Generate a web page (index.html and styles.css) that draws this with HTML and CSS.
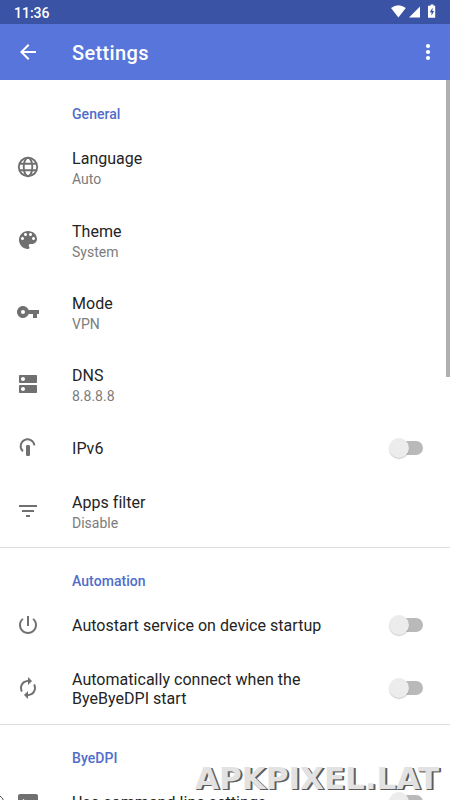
FILE: index.html
```html
<!DOCTYPE html>
<html lang="en">
<head>
<meta charset="utf-8">
<title>Settings</title>
<link rel="stylesheet" href="styles.css">
</head>
<body>
<div class="screen">
  <div class="status">
    <span class="time">11:36</span>
    <svg class="status-icons" width="48" height="16" viewBox="0 0 48 16" fill="#fff">
      <path d="M1 4Q8.200 -1.500 15.800 4L8.400 13.500Z"/>
      <path d="M30 2.500V13.500H19Z"/>
      <path d="M40.500 0.500h3v1.300h1.700v12h-7.200v-12h2.500z"/>
      <path d="M42.700 3.500l-3 4.700h1.800v3.600l2.600-4.700h-1.700z" fill="#3a53a4"/>
    </svg>
  </div>
  <header class="appbar">
    <svg class="back" width="24" height="24" viewBox="0 0 24 24" fill="#fff"><path d="M20 11H7.830l5.590-5.590L12 4l-8 8 8 8 1.410-1.410L7.830 13H20z"/></svg>
    <h1>Settings</h1>
    <svg class="more" width="24" height="24" viewBox="0 0 24 24" fill="#fff"><circle cx="12" cy="6" r="2.100"/><circle cx="12" cy="12" r="2.100"/><circle cx="12" cy="18" r="2.100"/></svg>
  </header>
  <main class="list">
    <section>
      <h2 class="first">General</h2>
      <div class="row two">
        <svg class="icon" viewBox="0 0 24 24"><g fill="none" stroke="currentColor" stroke-width="1.900"><circle cx="12" cy="12" r="9.200"/><ellipse cx="12" cy="12" rx="4.300" ry="9.200"/><path d="M3.500 8.800h17M3.500 15.200h17"/></g></svg>
        <div class="text"><div class="title">Language</div><div class="sub">Auto</div></div>
      </div>
      <div class="row two">
        <svg class="icon" viewBox="0 0 24 24"><path d="M12 3c-4.970 0-9 4.030-9 9s4.030 9 9 9c.83 0 1.500-.67 1.500-1.500 0-.39-.15-.74-.39-1.010-.23-.26-.38-.61-.38-.99 0-.83.670-1.500 1.500-1.500H16c2.760 0 5-2.240 5-5 0-4.420-4.030-8-9-8zm-5.500 9c-.83 0-1.500-.67-1.500-1.500S5.670 9 6.500 9 8 9.670 8 10.500 7.330 12 6.500 12zm3-4C8.670 8 8 7.330 8 6.500S8.670 5 9.500 5s1.500.67 1.500 1.500S10.330 8 9.500 8zm5 0c-.83 0-1.500-.67-1.500-1.500S13.670 5 14.500 5s1.500.67 1.500 1.500S15.330 8 14.500 8zm3 4c-.83 0-1.500-.67-1.500-1.500S16.670 9 17.500 9s1.500.67 1.500 1.500-.67 1.500-1.500 1.500z"/></svg>
        <div class="text"><div class="title">Theme</div><div class="sub">System</div></div>
      </div>
      <div class="row two">
        <svg class="icon" viewBox="0 0 24 24"><path d="M12.650 10C11.830 7.670 9.610 6 7 6c-3.310 0-6 2.690-6 6s2.690 6 6 6c2.610 0 4.830-1.670 5.650-4H17v4h4v-4h2v-4H12.650zM7 14c-1.100 0-2-.9-2-2s.9-2 2-2 2 .9 2 2-.9 2-2 2z"/></svg>
        <div class="text"><div class="title">Mode</div><div class="sub">VPN</div></div>
      </div>
      <div class="row two">
        <svg class="icon" viewBox="0 0 24 24"><path d="M20 13H4c-.55 0-1 .45-1 1v6c0 .55.45 1 1 1h16c.55 0 1-.45 1-1v-6c0-.55-.45-1-1-1zM7 19c-1.100 0-2-.9-2-2s.9-2 2-2 2 .9 2 2-.9 2-2 2zM20 3H4c-.55 0-1 .45-1 1v6c0 .55.45 1 1 1h16c.55 0 1-.45 1-1V4c0-.55-.45-1-1-1zM7 9c-1.100 0-2-.9-2-2s.9-2 2-2 2 .9 2 2-.9 2-2 2z"/></svg>
        <div class="text"><div class="title">DNS</div><div class="sub">8.8.8.8</div></div>
      </div>
      <div class="row one">
        <svg class="icon" viewBox="0 0 24 24"><path d="M6.900 15.300A6.900 6.900 0 1 1 18.400 9.300" fill="none" stroke="currentColor" stroke-width="1.900"/><rect x="10" y="9" width="4" height="11" rx="1.300"/></svg>
        <div class="text"><div class="title">IPv6</div></div>
        <span class="switch"></span>
      </div>
      <div class="row two">
        <svg class="icon" viewBox="0 0 24 24"><path d="M10 18h4v-2h-4v2zM3 6v2h18V6H3zm3 7h12v-2H6v2z"/></svg>
        <div class="text"><div class="title">Apps filter</div><div class="sub">Disable</div></div>
      </div>
    </section>
    <section class="divided">
      <h2>Automation</h2>
      <div class="row one">
        <svg class="icon" viewBox="0 0 24 24"><path d="M13 3h-2v10h2V3zm4.830 2.170l-1.420 1.420C17.990 7.860 19 9.810 19 12c0 3.870-3.130 7-7 7s-7-3.130-7-7c0-2.190 1.010-4.140 2.580-5.420L6.170 5.170C4.230 6.820 3 9.260 3 12c0 4.970 4.030 9 9 9s9-4.030 9-9c0-2.740-1.230-5.180-3.170-6.830z"/></svg>
        <div class="text"><div class="title">Autostart service on device startup</div></div>
        <span class="switch"></span>
      </div>
      <div class="row wrapped">
        <svg class="icon" viewBox="0 0 24 24"><path d="M12 6v3l4-4-4-4v3c-4.420 0-8 3.580-8 8 0 1.570.46 3.030 1.240 4.260L6.700 14.800c-.45-.83-.7-1.790-.7-2.800 0-3.310 2.690-6 6-6zm6.760 1.740L17.300 9.200c.44.840.7 1.790.7 2.800 0 3.310-2.690 6-6 6v-3l-4 4 4 4v-3c4.420 0 8-3.580 8-8 0-1.570-.46-3.030-1.240-4.260z"/></svg>
        <div class="text"><div class="title">Automatically connect when the<br>ByeByeDPI start</div></div>
        <span class="switch"></span>
      </div>
    </section>
    <section class="divided">
      <h2>ByeDPI</h2>
      <div class="row one">
        <svg class="icon" viewBox="0 0 24 24"><path d="M20 4H4c-1.100 0-2 .9-2 2v12c0 1.100.9 2 2 2h16c1.100 0 2-.9 2-2V6c0-1.100-.9-2-2-2zM7.500 17l-1.410-1.410L8.670 13l-2.590-2.590L7.500 9l4 4-4 4zM18 17h-6v-2h6v2z"/></svg>
        <div class="text"><div class="title">Use command line settings</div></div>
        <span class="switch"></span>
      </div>
    </section>
  </main>
  <div class="scrollbar"></div>
  <svg class="corner" width="4" height="5" viewBox="0 0 4 5"><path d="M0 1L3 4V5" fill="none" stroke="#555"/></svg>
  <div class="watermark">APKPIXEL.LAT</div>
</div>
</body>
</html>
```
FILE: styles.css
```css
* { box-sizing: border-box; }
body { margin: 0; font-family: Roboto, "Liberation Sans", sans-serif; background: #fff; }
.screen { position: relative; width: 450px; height: 800px; overflow: hidden; display: flex; flex-direction: column; }
.status { flex: none; height: 24px; background: #3a53a4; color: #fff; display: flex; align-items: center; justify-content: space-between; padding: 0 12px 0 14px; }
.time { font-size: 14px; font-weight: 500; line-height: 24px; padding-top: 2px; }
.appbar { flex: none; height: 56px; background: #5875dc; color: #fff; display: flex; align-items: center; padding: 0 10px 0 16px; }
h1 { flex: 1; margin: 2px 0 0 32px; font-size: 20px; font-weight: 500; letter-spacing: .35px; }
.list { flex: none; }
h2 { margin: 0; height: 49.600px; padding: 8px 0 0 72px; font-size: 14px; font-weight: 500; line-height: 50px; letter-spacing: .05px; color: #506dcb; }
h2.first { height: 51px; padding-top: 9px; }
.divided { border-top: 1px solid #dedede; }
.row { display: flex; align-items: center; padding: 0 27px 0 16px; }
.two { height: 72.400px; }
.two .text { padding-top: 4px; }
.wrapped { height: 72.400px; }
.wrapped .text { padding-top: 2px; }
.one { height: 54px; }
.icon { flex: none; width: 24px; height: 24px; margin-right: 32px; color: #707070; fill: currentColor; }
.text { flex: 1; padding-top: 1px; }
.title { font-size: 16px; line-height: 19px; letter-spacing: .03px; color: #242424; white-space: nowrap; }
.two .title { line-height: 20px; }
.sub { font-size: 14px; line-height: 20px; color: #7c7c7c; }
.switch { position: relative; width: 29px; height: 14px; border-radius: 7px; background: #b9b9b9; }
.switch::before { content: ""; position: absolute; left: -5px; top: -3px; width: 20px; height: 20px; border-radius: 50%; background: #ececec; box-shadow: 0 1px 1px rgba(0,0,0,.2); }
.scrollbar { position: absolute; right: 0; top: 80px; width: 4px; height: 297px; background: #b0b0b0; }
.corner { position: absolute; left: 0; bottom: 0; }
.watermark { position: absolute; left: 195px; top: 760px; font: bold 31px/36px "DejaVu Sans", sans-serif; color: #e2e2e2; text-shadow: 1px 1px #5c5c5c, 2px 1px #5c5c5c; white-space: nowrap; }
```
